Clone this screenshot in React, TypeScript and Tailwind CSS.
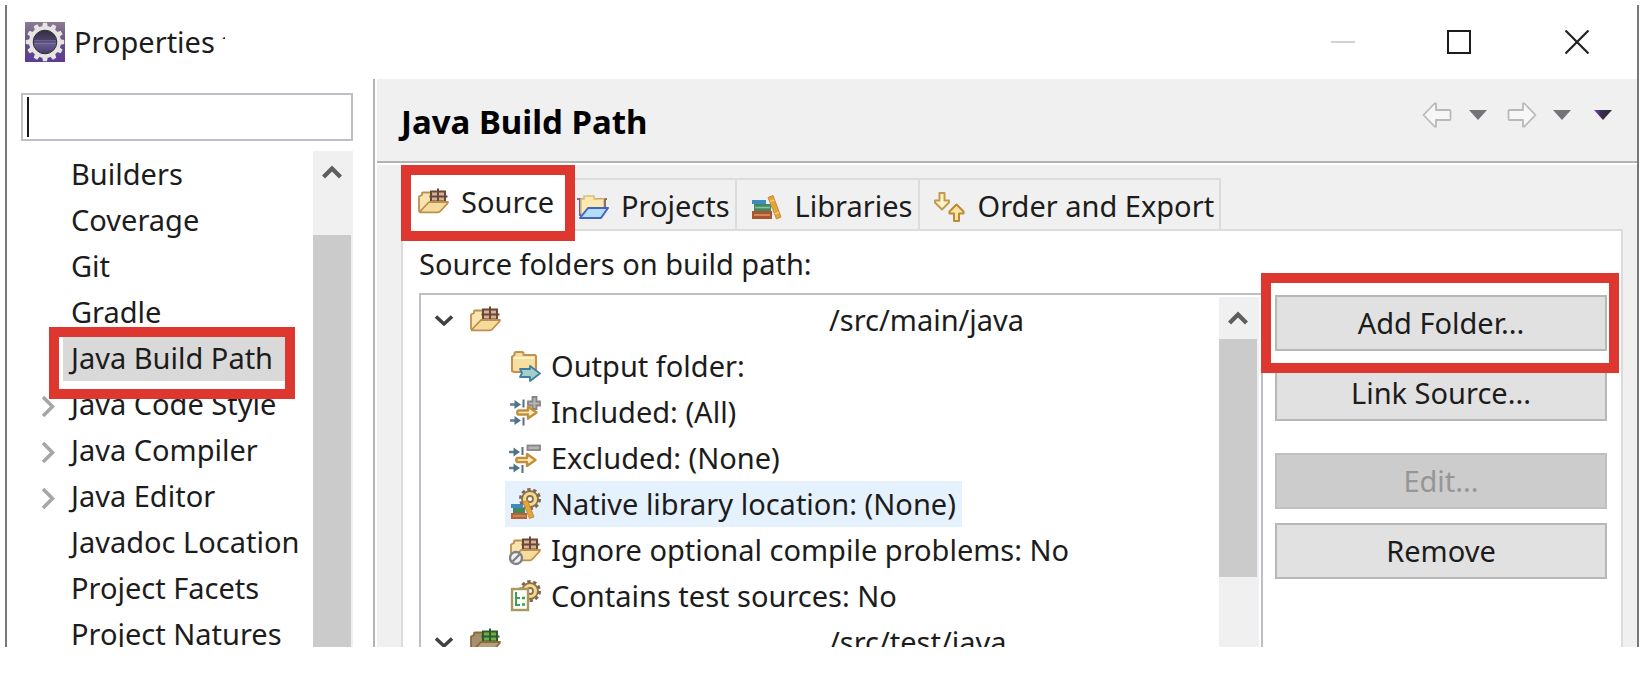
import type { ReactNode } from "react";

type IconProps = { className?: string };

function Svg({ children, className = "size-8" }: { children: ReactNode; className?: string }) {
  return (
    <svg viewBox="0 0 32 32" className={`shrink-0 ${className}`} fill="none" aria-hidden="true">
      {children}
    </svg>
  );
}

/* ---------- icons ---------- */

function EclipseIcon() {
  const teeth = Array.from({ length: 12 }, (_, i) => i * 30);
  return (
    <svg viewBox="0 0 40 40" className="size-10 shrink-0" aria-hidden="true">
      <defs>
        <linearGradient id="ecBg" x1="0" y1="0" x2="0" y2="1">
          <stop offset="0" stopColor="#8d7a96" />
          <stop offset="0.5" stopColor="#63507f" />
          <stop offset="1" stopColor="#5b3a97" />
        </linearGradient>
        <linearGradient id="ecCore" x1="0" y1="0" x2="0" y2="1">
          <stop offset="0" stopColor="#2c2838" />
          <stop offset="0.45" stopColor="#4d4468" />
          <stop offset="0.55" stopColor="#6a5d92" />
          <stop offset="1" stopColor="#3f3760" />
        </linearGradient>
      </defs>
      <rect width="40" height="40" fill="url(#ecBg)" />
      {teeth.map((a) => (
        <path key={a} d="M17 6 L18 0.8 H22 L23 6 Z" fill="#e6e4e2" transform={`rotate(${a} 20 20)`} />
      ))}
      <circle cx="20" cy="20" r="13.8" fill="url(#ecCore)" stroke="#e6e4e2" strokeWidth="4.4" />
      <circle cx="20" cy="20" r="11.8" fill="none" stroke="#2a2535" strokeWidth="1" />
      <path d="M9 18.5h22M9 21.5h22" stroke="#8f86ad" strokeWidth="0.8" opacity="0.6" />
    </svg>
  );
}

function FolderBody({ test = false }: { test?: boolean }) {
  const fill = test ? "#b5a07c" : "#f5dc9c";
  const back = test ? "#a5906c" : "#f7e4b0";
  const line = test ? "#8a6a3c" : "#bd8f4c";
  const grid = test ? "#2f5a2c" : "#6b4636";
  return (
    <>
      <path
        d="M2 25.500V10.500L5 9V7.500Q5 6.500 6 6.500H14V16H28V14"
        fill={back}
        stroke={line}
        strokeWidth="1.800"
        strokeLinejoin="round"
      />
      <rect x="14" y="5.5" width="14" height="10" fill={test ? "#6fae4e" : "#d2b298"} />
      <path d="M14 5.500h14v10H14zM12.500 10.500h18M21 2.500v13" stroke={grid} strokeWidth="2" />
      <path
        d="M2.500 26L12 16H31q0 1-1 2L23.500 25q-1 1.300-2.500 1.300H3.500q-1 0-1-.3z"
        fill={fill}
        stroke={line}
        strokeWidth="1.800"
        strokeLinejoin="round"
      />
    </>
  );
}

function PackageFolderIcon({ className }: IconProps) {
  return (
    <Svg className={className}>
      <FolderBody />
    </Svg>
  );
}

function TestFolderIcon({ className }: IconProps) {
  return (
    <Svg className={className}>
      <FolderBody test />
    </Svg>
  );
}

function ProjectsIcon({ className }: IconProps) {
  return (
    <Svg className={className}>
      <path d="M0 9h30" stroke="#857070" strokeWidth="2" />
      <path d="M3 26V9" stroke="#5a63b0" strokeWidth="2" />
      <path d="M4 23V9h3V6h10v3h10v9H12l-6 7z" fill="#fbe9b4" stroke="#dcc07c" strokeWidth="1.6" />
      <path d="M28 9v8" stroke="#857070" strokeWidth="2" />
      <path d="M3 28l8-10h20l-7 10z" fill="#b5dcf8" stroke="#4166c0" strokeWidth="2" strokeLinejoin="round" />
    </Svg>
  );
}

function LibrariesIcon({ className }: IconProps) {
  return (
    <Svg className={className}>
      <rect x="1" y="10" width="14" height="4" fill="#3d8cc0" />
      <rect x="3" y="14" width="17" height="7" fill="#3f8a62" />
      <path d="M4 17.5h15" stroke="#7fc49c" strokeWidth="1.6" />
      <rect x="1" y="21" width="20" height="8" fill="#a9552f" />
      <path d="M3 25h16" stroke="#d08a58" strokeWidth="2" />
      <path d="M17 7.500l5-2L30 27l-4.500 2z" fill="#e3a53c" stroke="#c98a35" strokeWidth="1" />
      <path d="M19 11.500l4.500-1.500M23.500 24l4.500-1.500" stroke="#f6d489" strokeWidth="1.200" />
    </Svg>
  );
}

function OrderIcon({ className }: IconProps) {
  return (
    <Svg className={className}>
      <path
        d="M5.500 3h5v7.500h4.500v2L8 19.500 1 12.500v-2h4.500z"
        fill="#fdf3cf"
        stroke="#c19a4b"
        strokeWidth="2"
        strokeLinejoin="round"
      />
      <path
        d="M20 31h5v-7.500h4.500v-2l-7-7-7 7v2H20z"
        fill="#fbe6a0"
        stroke="#b98c38"
        strokeWidth="2"
        strokeLinejoin="round"
      />
    </Svg>
  );
}

function OutputFolderIcon({ className }: IconProps) {
  return (
    <Svg className={className}>
      <path
        d="M3 21V6.500L5.500 5V3.500q0-1.500 1.500-1.500h6q1.500 0 1.500 1.500V5H25.500q1.500 0 1.500 1.500V21L25.500 22H5z"
        fill="#f7dfa0"
        stroke="#c2924d"
        strokeWidth="2"
        strokeLinejoin="round"
      />
      <path d="M5 8h20" stroke="#fdf2cf" strokeWidth="2" />
      <path
        d="M11 19h10v-3l10 7.500L21 31v-4H11l2-4z"
        fill="#a5cfc6"
        stroke="#3f7fa6"
        strokeWidth="1.800"
        strokeLinejoin="round"
      />
    </Svg>
  );
}

function FilterArrows() {
  return (
    <>
      <path d="M0 10h8M0 26h8" stroke="#5c7f94" strokeWidth="2.400" />
      <path d="M4.500 5.500l6.500 4.500-6.500 4.500zM4.500 21.500l6.500 4.500-6.500 4.500z" fill="#4f7388" />
      <path d="M13.500 5v8M13.500 23v8" stroke="#5b6f80" strokeWidth="2" />
    </>
  );
}

function GoldArrow() {
  return (
    <path
      d="M8 16h10v-4l8.500 6-8.500 6v-4H8q-1.500-2 0-4z"
      fill="#fdedc0"
      stroke="#c08f3a"
      strokeWidth="2.400"
      strokeLinejoin="round"
    />
  );
}

function IncludedIcon({ className }: IconProps) {
  return (
    <Svg className={className}>
      <g transform="translate(1 -1.5)">
        <FilterArrows />
      </g>
      <path d="M23.500 1h4v4.500H31v4h-3.500V13h-4V9.500H19v-4h4.500z" fill="#b5b5b5" stroke="#858585" strokeWidth="1.800" />
      <g transform="translate(1 -1.5)">
        <GoldArrow />
      </g>
    </Svg>
  );
}

function ExcludedIcon({ className }: IconProps) {
  return (
    <Svg className={className}>
      <FilterArrows />
      <rect x="18.5" y="3.500" width="12.500" height="4.500" fill="#b5b5b5" stroke="#858585" strokeWidth="1.800" />
      <GoldArrow />
    </Svg>
  );
}

function Gear({ cx, cy }: { cx: number; cy: number }) {
  return (
    <>
      <circle cx={cx} cy={cy} r="9.4" stroke="#7d6650" strokeWidth="3.2" strokeDasharray="3.3 2.6" />
      <circle cx={cx} cy={cy} r="8" fill="#f3db8e" stroke="#8c7050" strokeWidth="1.800" />
      <circle cx={cx} cy={cy} r="3" fill="#fffaf0" stroke="#8a7050" strokeWidth="1.800" />
    </>
  );
}

function NativeLibIcon({ className }: IconProps) {
  return (
    <Svg className={className}>
      <rect x="2" y="16" width="12" height="4" fill="#3d8cc0" />
      <rect x="4" y="20" width="12" height="5" fill="#3f8a58" />
      <rect x="2" y="25" width="16" height="6" fill="#b5613a" />
      <path d="M4 28h13" stroke="#d58c5e" strokeWidth="1.600" />
      <Gear cx={21} cy={11} />
      <path d="M14 14l4.500-1.500L25 29l-4.500 1.500z" fill="#e3a53c" stroke="#c98a35" strokeWidth="1" />
    </Svg>
  );
}

function IgnoreIcon({ className }: IconProps) {
  return (
    <Svg className={className}>
      <FolderBody />
      <circle cx="7" cy="24" r="6" fill="#f2f2f2" stroke="#7c8288" strokeWidth="2.400" />
      <path d="M3.500 27.500l7-7" stroke="#7c8288" strokeWidth="2.400" />
    </Svg>
  );
}

function TestSourcesIcon({ className }: IconProps) {
  return (
    <Svg className={className}>
      <Gear cx={21} cy={11} />
      <rect x="3" y="9" width="16" height="21" fill="#fbfff8" stroke="#ab9860" strokeWidth="2.400" />
      <path d="M7 12v13h4M7 18h4" stroke="#3d9e5c" strokeWidth="2" />
      <path d="M13 18h3M13 24.500h3" stroke="#3d9e5c" strokeWidth="2.400" />
    </Svg>
  );
}

function ChevronRight() {
  return (
    <svg viewBox="0 0 14 24" className="h-6 w-3.5 shrink-0" fill="none" aria-hidden="true">
      <path d="M2 3l9.500 9.500L2 22" stroke="#a6a6a6" strokeWidth="3.600" />
    </svg>
  );
}

function ChevronDown() {
  return (
    <svg viewBox="0 0 18 12" className="h-3 w-[18px] shrink-0" fill="none" aria-hidden="true">
      <path d="M1 2.500l8 7.500 8-7.500" stroke="#404040" strokeWidth="3.400" />
    </svg>
  );
}

function ChevronUp() {
  return (
    <svg viewBox="0 0 20 16" className="h-4 w-5" fill="none" aria-hidden="true">
      <path d="M1.500 13L10 4.500l8.500 8.500" stroke="#5e5e5e" strokeWidth="4.400" />
    </svg>
  );
}

function NavArrow({ flip = false }: { flip?: boolean }) {
  return (
    <svg
      viewBox="0 0 30 26"
      className={flip ? "h-[26px] w-[30px] -scale-x-100" : "h-[26px] w-[30px]"}
      aria-hidden="true"
    >
      <path
        d="M14 1.500V8h13.500q1 0 1 1v8q0 1-1 1H14v6.500h-1.500L1.500 13 12.500 1.500z"
        fill="#f7f7f7"
        stroke="#b9b9b9"
        strokeWidth="1.800"
        strokeLinejoin="round"
      />
    </svg>
  );
}

function Triangle({ dark = false }: { dark?: boolean }) {
  return (
    <svg viewBox="0 0 18 10" className="h-2.5 w-[18px]" aria-hidden="true">
      <defs>
        <linearGradient id="menuTri" x1="0" x2="1">
          <stop offset="0.1" stopColor="#6a3fb0" />
          <stop offset="0.4" stopColor="#3b2c4c" />
          <stop offset="1" stopColor="#2b2a2e" />
        </linearGradient>
      </defs>
      <path d="M0 0h18L9 10z" fill={dark ? "url(#menuTri)" : "#727478"} />
    </svg>
  );
}

/* ---------- shared pieces ---------- */

function Scrollbar({ thumb }: { thumb: string }) {
  return (
    <div className="flex w-10 shrink-0 flex-col bg-[#f0f0f0]">
      <button type="button" aria-label="Scroll up" className="flex h-[42px] w-[38px] shrink-0 items-center justify-center">
        <ChevronUp />
      </button>
      <div className={`w-[38px] bg-[#cbcbcb] ${thumb}`} />
    </div>
  );
}

function Highlight({ className }: { className: string }) {
  return <span className={`pointer-events-none absolute z-10 border-10 border-[#dd3730] ${className}`} />;
}

/* ---------- left navigation ---------- */

const pages: { label: string; expandable?: boolean; selected?: boolean }[] = [
  { label: "Builders" },
  { label: "Coverage" },
  { label: "Git" },
  { label: "Gradle" },
  { label: "Java Build Path", selected: true },
  { label: "Java Code Style", expandable: true },
  { label: "Java Compiler", expandable: true },
  { label: "Java Editor", expandable: true },
  { label: "Javadoc Location" },
  { label: "Project Facets" },
  { label: "Project Natures" },
];

function Sidebar() {
  return (
    <nav className="flex w-[366px] shrink-0 flex-col pr-5 pl-3.5">
      <label className="mt-3.5 flex h-12 shrink-0 items-center border-2 border-[#bebec6] pl-1">
        <span className="h-10 w-0.5 bg-[#1a1a1a]" />
        <input type="text" aria-label="Filter" className="w-full min-w-0 outline-none" />
      </label>
      <div className="mt-2.5 flex min-h-0 flex-1">
        <ul className="min-w-0 flex-1">
          {pages.map((p) => (
            <li key={p.label} className="flex h-[46px] items-center pl-5">
              <span className="flex w-[22px] shrink-0 pt-1">{p.expandable && <ChevronRight />}</span>
              <span className={p.selected ? "relative bg-[#d9d9d9] pr-3 pl-2" : "px-2"}>
                {p.label}
                {p.selected && <Highlight className="-top-2 -right-2.5 -bottom-[18px] -left-3.5" />}
              </span>
            </li>
          ))}
        </ul>
        <Scrollbar thumb="mt-[42px] flex-1" />
      </div>
    </nav>
  );
}

/* ---------- build path page ---------- */

const tabs: { label: string; Icon: (p: IconProps) => ReactNode }[] = [
  { label: "Projects", Icon: ProjectsIcon },
  { label: "Libraries", Icon: LibrariesIcon },
  { label: "Order and Export", Icon: OrderIcon },
];

const details: { label: string; Icon: (p: IconProps) => ReactNode; hovered?: boolean }[] = [
  { label: "Output folder:", Icon: OutputFolderIcon },
  { label: "Included: (All)", Icon: IncludedIcon },
  { label: "Excluded: (None)", Icon: ExcludedIcon },
  { label: "Native library location: (None)", Icon: NativeLibIcon, hovered: true },
  { label: "Ignore optional compile problems: No", Icon: IgnoreIcon },
  { label: "Contains test sources: No", Icon: TestSourcesIcon },
];

function RootRow({ path, icon }: { path: string; icon: ReactNode }) {
  return (
    <div className="flex h-[46px] items-center pl-3.5">
      <ChevronDown />
      <span className="ml-4 flex w-[360px] shrink-0">{icon}</span>
      {path}
    </div>
  );
}

function PushButton({ children, disabled = false }: { children: ReactNode; disabled?: boolean }) {
  return (
    <button
      type="button"
      disabled={disabled}
      className="h-14 w-full shrink-0 border-2 border-[#b7b7b7] bg-[#e1e1e1] disabled:border-[#bfbfbf] disabled:bg-[#cccccc] disabled:text-[#969696]"
    >
      {children}
    </button>
  );
}

function BuildPath() {
  return (
    <main className="flex min-w-0 flex-1 flex-col bg-[#f0f0f0]">
      <header className="flex h-[84px] shrink-0 items-center justify-between border-b-2 border-[#b2b2b2] pt-1 pr-[25px] pl-6">
        <h1 className="text-[33px] font-bold text-black">Java Build Path</h1>
        <div className="flex items-center pb-3.5">
          <button type="button" aria-label="Back"><NavArrow /></button>
          <button type="button" aria-label="Back history" className="ml-[17px]"><Triangle /></button>
          <button type="button" aria-label="Forward" className="ml-5"><NavArrow flip /></button>
          <button type="button" aria-label="Forward history" className="ml-4"><Triangle /></button>
          <button type="button" aria-label="View menu" className="ml-[23px]"><Triangle dark /></button>
        </div>
      </header>

      <div className="flex min-h-0 flex-1 flex-col border-t-2 border-white pr-3.5 pl-6">
        <div role="tablist" className="relative flex h-[66px] shrink-0 items-end">
          <button
            type="button"
            role="tab"
            aria-selected="true"
            className="relative z-10 flex h-14 w-[174px] shrink-0 items-center gap-3 bg-white pb-0.5 pl-4"
          >
            <PackageFolderIcon />
            Source
            <Highlight className="inset-x-0 -inset-y-2.5" />
          </button>
          {tabs.map(({ label, Icon }, i) => (
            <button
              key={label}
              type="button"
              role="tab"
              aria-selected="false"
              className={`flex h-[53px] shrink-0 items-center gap-3 border-t-2 border-r-2 border-[#dcdcdc] pr-[5px] ${i === 0 ? "pl-0.5" : "pl-3.5"}`}
            >
              <Icon />
              {label}
            </button>
          ))}
        </div>

        <section className="-mt-0.5 flex min-h-0 flex-1 flex-col border-x-2 border-t-2 border-[#dcdcdc] bg-white pr-3.5 pl-4">
          <p className="h-[62px] shrink-0 pt-3 leading-[42px]">Source folders on build path:</p>
          <div className="flex min-h-0 flex-1 gap-3">
            <div className="flex min-w-0 flex-1 border-x-2 border-t-2 border-[#bebec6] pt-0.5 pr-0.5">
              <div className="min-w-0 flex-1 overflow-hidden">
                <RootRow path="/src/main/java" icon={<PackageFolderIcon />} />
                {details.map(({ label, Icon, hovered }) => (
                  <div key={label} className="flex h-[46px] pl-[84px]">
                    <span className={`flex items-center gap-2.5 pr-1.5 pl-1 ${hovered ? "bg-[#e5f1fc]" : ""}`}>
                      <Icon />
                      {label}
                    </span>
                  </div>
                ))}
                <RootRow path="/src/test/java" icon={<TestFolderIcon />} />
              </div>
              <Scrollbar thumb="h-[238px]" />
            </div>

            <div className="flex w-[332px] shrink-0 flex-col gap-3.5 pt-0.5">
              <div className="relative flex">
                <PushButton>Add Folder...</PushButton>
                <Highlight className="-top-[22px] -right-3 -bottom-[22px] -left-3.5" />
              </div>
              <PushButton>Link Source...</PushButton>
              <div className="flex flex-col gap-3.5 pt-[18px]">
                <PushButton disabled>Edit...</PushButton>
                <PushButton>Remove</PushButton>
              </div>
            </div>
          </div>
        </section>
      </div>
    </main>
  );
}

export default function App() {
  return (
    <div className="h-screen min-w-[1200px] overflow-hidden bg-white pt-[5px] pr-[7px] pb-[37px] pl-[5px] font-['Noto_Sans','Open_Sans',sans-serif] text-[29px] leading-[46px] whitespace-nowrap text-[#1c1c1c]">
      <div className="flex h-full flex-col overflow-hidden border-x-2 border-[#787878]">
        <div className="flex h-[74px] shrink-0 items-center pl-[18px]">
          <EclipseIcon />
          <span className="ml-[9px] w-[151px] overflow-hidden">Properties for</span>
          <div className="ml-auto flex items-center pr-12">
            <button type="button" aria-label="Minimize" className="h-0.5 w-6 bg-[#d2d2d2]" />
            <button type="button" aria-label="Maximize" className="ml-[92px] size-6 border-2 border-[#1c1c1c]" />
            <button type="button" aria-label="Close" className="ml-[94px]">
              <svg viewBox="0 0 24 24" className="size-6" aria-hidden="true">
                <path d="M0.500 0.500l23 23M23.500 0.500l-23 23" stroke="#222" strokeWidth="2.200" />
              </svg>
            </button>
          </div>
        </div>
        <div className="flex min-h-0 flex-1">
          <Sidebar />
          <div className="w-1 shrink-0 border-l-2 border-[#b5b5b5] bg-white" />
          <BuildPath />
        </div>
      </div>
    </div>
  );
}
